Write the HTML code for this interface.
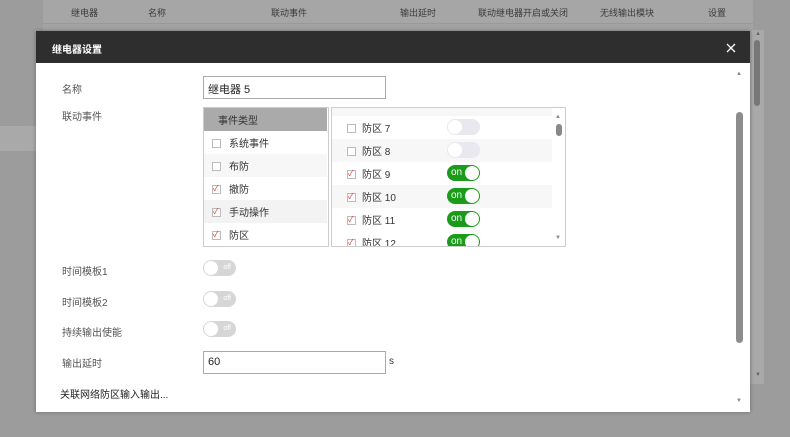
<!DOCTYPE html>
<html><head><meta charset="utf-8"><style>
*{margin:0;padding:0;box-sizing:border-box}
body{width:790px;height:437px;overflow:hidden;background:#9c9c9c;font-family:"Liberation Sans","Noto Sans CJK SC",sans-serif;font-size:10px;color:#333;position:relative}
.abs{position:absolute}
.hdr{left:43px;top:0;width:710px;height:24px;background:#a6a6a6;border-bottom:1px solid #999}
.hdr span{position:absolute;top:6px;font-size:9px;color:#3a3a3a}
.dlg{left:36px;top:31px;width:714px;height:381px;background:#fff;box-shadow:0 0 4px rgba(0,0,0,.3)}
.title{left:0;top:0;width:714px;height:32px;background:#2e2e2e;color:#fff;font-size:10px;padding:10px 0 0 16px;font-weight:bold}
.lbl{position:absolute;left:26px;font-size:10px;color:#555}
.inp{position:absolute;left:167px;width:183px;height:23px;border:1px solid #aaa;padding:4px 4px;font-size:11px;color:#222}
.tg{position:absolute;width:33px;height:16px;border-radius:8px;background:#d6d6d6}
.tg i{position:absolute;left:1px;top:1px;width:14px;height:14px;border-radius:50%;background:#fff}
.tg b{position:absolute;right:5px;top:3px;font-size:7px;color:#fff;font-weight:normal;line-height:9px}
.on{background:#1a9b1a}
.on i{left:auto;right:1px}
.on b{left:4px;right:auto;top:2px;font-size:10px;line-height:11px}
.off{background:#e8e8ee}
.row{position:absolute;left:0;height:23px;width:123px;font-size:10px;color:#333}
.cb{position:absolute;width:9px;height:9px;border:1px solid #bbb;background:#fff}
.cb.c::after{content:"✓";position:absolute;left:0px;top:-3px;font-size:8px;color:#d33}
</style></head><body>
<div class="abs" style="left:0;top:126px;width:43px;height:25px;background:#a9a9a9"></div>
<div class="abs hdr">
<span style="left:28px">继电器</span><span style="left:105px">名称</span><span style="left:228px">联动事件</span><span style="left:357px">输出延时</span><span style="left:435px">联动继电器开启或关闭</span><span style="left:557px">无线输出模块</span><span style="left:665px">设置</span>
</div>
<div class="abs" style="left:43px;top:24px;width:710px;height:360px;background:#a3a3a3"></div>
<div class="abs" style="left:752px;top:30px;width:12px;height:354px;background:#a9a9a9"></div>
<div class="abs" style="left:754px;top:40px;width:6px;height:66px;border-radius:3px;background:#777"></div>
<div class="abs" style="left:755px;top:31px;font-size:6px;color:#666">▲</div>
<div class="abs" style="left:755px;top:372px;font-size:6px;color:#666">▼</div>
<div class="abs dlg">
<div class="abs title">继电器设置</div>
<svg class="abs" style="left:690px;top:12px" width="10" height="10"><path d="M1 1L9 9M9 1L1 9" stroke="#fff" stroke-width="1.3"/></svg>
<div class="abs" style="left:700px;top:40px;font-size:6px;color:#888">▲</div>
<div class="abs" style="left:700px;top:367px;font-size:6px;color:#888">▼</div>
<div class="abs" style="left:700px;top:81px;width:7px;height:231px;border-radius:4px;background:#8d8d8d"></div>
<div class="lbl" style="top:50px">名称</div>
<div class="inp" style="top:45px">继电器 5</div>
<div class="lbl" style="top:77px">联动事件</div>
<div class="abs" style="left:167px;top:76px;width:126px;height:140px;border:1px solid #ccc;background:#fff;overflow:hidden">
<div class="row" style="top:0;background:#aaa;padding:4px 0 0 14px">事件类型</div>
<div class="row" style="top:23px;padding:4px 0 0 25px">系统事件<span class="cb" style="left:8px;top:8px"></span></div>
<div class="row" style="top:46px;background:#f7f7f7;padding:4px 0 0 25px">布防<span class="cb" style="left:8px;top:8px"></span></div>
<div class="row" style="top:69px;padding:4px 0 0 25px">撤防<span class="cb c" style="left:8px;top:8px"></span></div>
<div class="row" style="top:92px;background:#f3f3f3;padding:4px 0 0 25px">手动操作<span class="cb c" style="left:8px;top:8px"></span></div>
<div class="row" style="top:115px;padding:4px 0 0 25px">防区<span class="cb c" style="left:8px;top:8px"></span></div>
</div>
<div class="abs" style="left:295px;top:76px;width:235px;height:140px;border:1px solid #ccc;background:#fff;overflow:hidden">
<div class="abs" style="left:223px;top:6px;font-size:6px;color:#888">▲</div>
<div class="abs" style="left:223px;top:127px;font-size:6px;color:#888">▼</div>
<div class="abs" style="left:224px;top:16px;width:6px;height:12px;border-radius:3px;background:#888"></div>
<div class="abs" style="left:0;top:-2px;width:220px;height:10px;background:#f7f7f7"></div>
<div class="abs" style="left:0;top:8px;width:220px;height:23px;padding:4px 0 0 30px">防区 7<span class="cb" style="left:15px;top:8px"></span><span class="tg off" style="left:115px;top:3px"><i></i></span></div>
<div class="abs" style="left:0;top:31px;width:220px;height:23px;background:#f7f7f7;padding:4px 0 0 30px">防区 8<span class="cb" style="left:15px;top:8px"></span><span class="tg off" style="left:115px;top:3px"><i></i></span></div>
<div class="abs" style="left:0;top:54px;width:220px;height:23px;padding:4px 0 0 30px">防区 9<span class="cb c" style="left:15px;top:8px"></span><span class="tg on" style="left:115px;top:3px"><b>on</b><i></i></span></div>
<div class="abs" style="left:0;top:77px;width:220px;height:23px;background:#f7f7f7;padding:4px 0 0 30px">防区 10<span class="cb c" style="left:15px;top:8px"></span><span class="tg on" style="left:115px;top:3px"><b>on</b><i></i></span></div>
<div class="abs" style="left:0;top:100px;width:220px;height:23px;padding:4px 0 0 30px">防区 11<span class="cb c" style="left:15px;top:8px"></span><span class="tg on" style="left:115px;top:3px"><b>on</b><i></i></span></div>
<div class="abs" style="left:0;top:123px;width:220px;height:23px;padding:4px 0 0 30px">防区 12<span class="cb c" style="left:15px;top:8px"></span><span class="tg on" style="left:115px;top:3px"><b>on</b><i></i></span></div>
</div>
<div class="lbl" style="top:232px">时间模板1</div>
<div class="tg" style="left:167px;top:229px"><i></i><b>off</b></div>
<div class="lbl" style="top:263px">时间模板2</div>
<div class="tg" style="left:167px;top:260px"><i></i><b>off</b></div>
<div class="lbl" style="top:293px">持续输出使能</div>
<div class="tg" style="left:167px;top:290px"><i></i><b>off</b></div>
<div class="lbl" style="top:324px">输出延时</div>
<div class="inp" style="top:320px">60</div>
<div class="abs" style="left:353px;top:325px;font-size:10px">s</div>
<div class="abs" style="left:24px;top:355px;font-size:10px;color:#222">关联网络防区输入输出...</div>
</div>
</body></html>
